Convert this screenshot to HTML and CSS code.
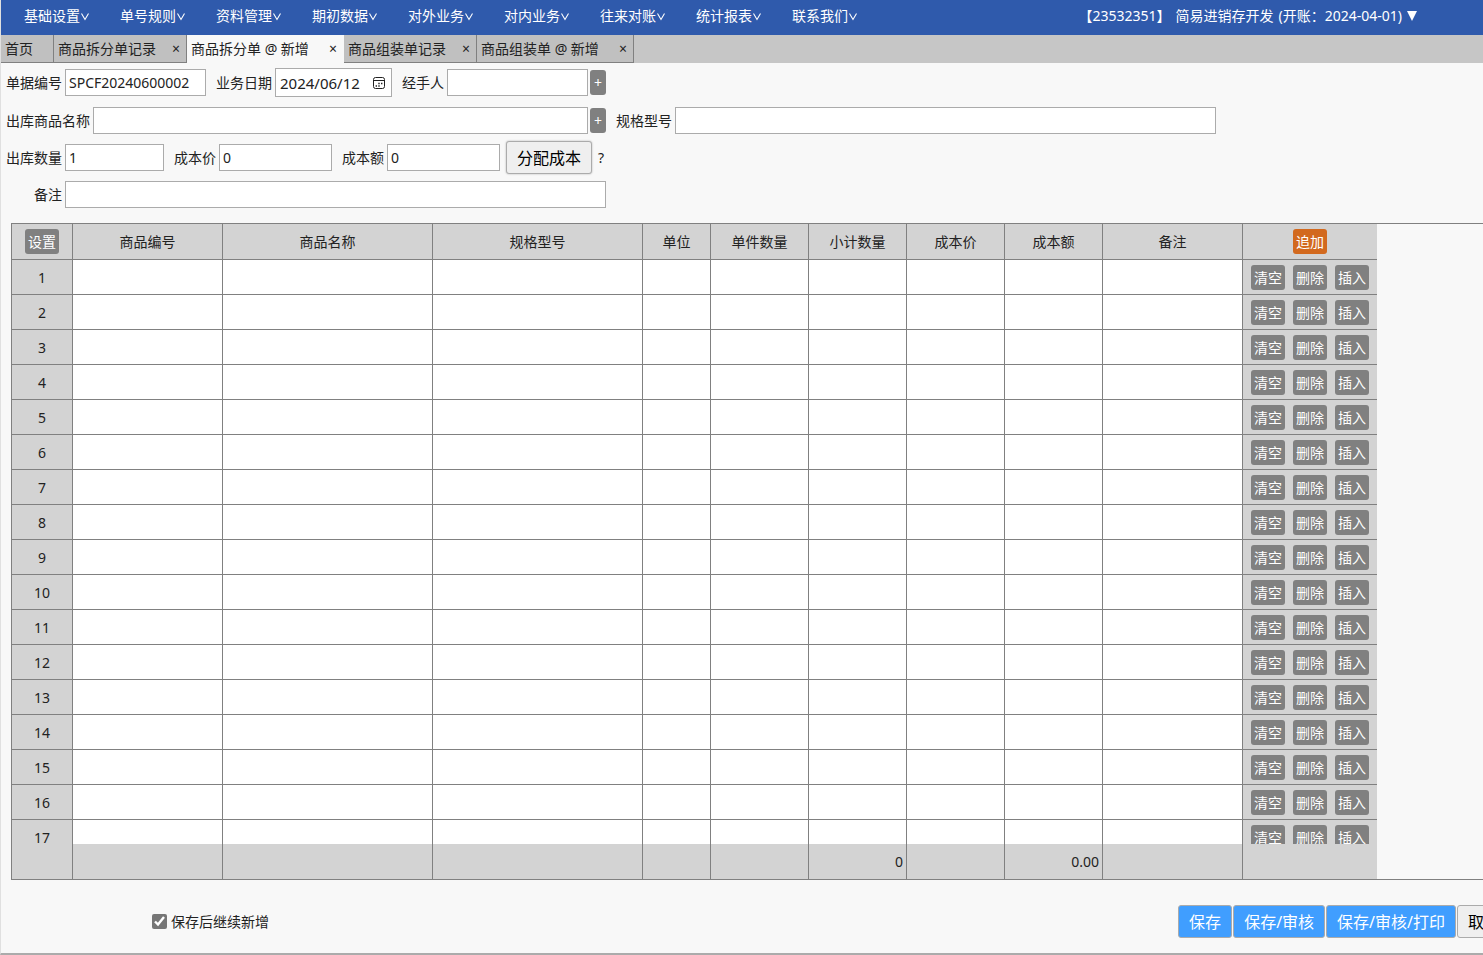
FILE: index.html
```html
<!DOCTYPE html>
<html lang="zh-CN">
<head>
<meta charset="utf-8">
<title>商品拆分单 @ 新增</title>
<link rel="stylesheet" href="styles.css">
</head>
<body>
<div class="app">
  <header class="navbar">
    <nav class="menu" id="menu"></nav>
    <button class="account" type="button"><span>【23532351】</span><span>简易进销存开发</span><span>(开账：2024-04-01)</span><svg class="caret" viewBox="0 0 10 10"><path d="M0 0h10L5 10z" fill="currentColor"/></svg></button>
  </header>

  <div class="tabs">
    <div class="tab"><a class="tab-link tab-home" href="#">首页</a></div>
    <div class="tab"><a class="tab-link" href="#">商品拆分单记录</a><button class="tab-close" type="button">×</button></div>
    <div class="tab tab-new tab-active"><a class="tab-link" href="#">商品拆分单 @ 新增</a><button class="tab-close" type="button">×</button></div>
    <div class="tab"><a class="tab-link" href="#">商品组装单记录</a><button class="tab-close" type="button">×</button></div>
    <div class="tab tab-new"><a class="tab-link" href="#">商品组装单 @ 新增</a><button class="tab-close" type="button">×</button></div>
  </div>

  <main class="page">
    <form class="form">
      <div class="row row-first">
        <div class="field"><label class="label" for="no">单据编号</label><input class="input w-code" id="no" type="text" value="SPCF20240600002"></div>
        <div class="field"><label class="label" for="date">业务日期</label>
          <div class="date">
            <input class="date-input" id="date" type="text" value="2024/06/12">
            <button class="date-button" type="button" aria-label="日历"><svg class="date-icon" viewBox="0 0 14 14"><rect x="1.5" y="1.5" width="11" height="11" rx="2" fill="none" stroke="#222"/><path d="M1.5 4.5h11" stroke="#222"/><path d="M6.3 7.5h1.4M9 7.5h1.4M3.6 10H5M6.3 10h1.4" stroke="#222" stroke-width="1.3"/></svg></button>
          </div>
        </div>
        <div class="field"><label class="label" for="who">经手人</label><input class="input w-code" id="who" type="text"><button class="chip chip-plus" type="button">+</button></div>
      </div>
      <div class="row">
        <div class="field"><label class="label" for="goods">出库商品名称</label><input class="input w-goods" id="goods" type="text"><button class="chip chip-plus" type="button">+</button></div>
        <div class="field"><label class="label" for="spec">规格型号</label><input class="input w-long" id="spec" type="text"></div>
      </div>
      <div class="row">
        <div class="field"><label class="label" for="qty">出库数量</label><input class="input w-qty" id="qty" type="text" value="1"></div>
        <div class="field"><label class="label" for="price">成本价</label><input class="input w-cost" id="price" type="text" value="0"></div>
        <div class="field"><label class="label" for="amount">成本额</label><input class="input w-cost" id="amount" type="text" value="0"><button class="button button-split" type="button">分配成本</button><span class="help">?</span></div>
      </div>
      <div class="row">
        <div class="field"><label class="label label-note" for="note">备注</label><input class="input w-long" id="note" type="text"></div>
      </div>
    </form>

    <div class="grid">
      <table class="table">
        <colgroup>
          <col class="c-no"><col class="c-code"><col class="c-name"><col class="c-name"><col class="c-unit"><col class="c-num"><col class="c-num"><col class="c-num"><col class="c-num"><col class="c-note"><col class="c-ops">
        </colgroup>
        <thead>
          <tr>
            <th><button class="chip" type="button">设置</button></th>
            <th>商品编号</th><th>商品名称</th><th>规格型号</th><th>单位</th><th>单件数量</th><th>小计数量</th><th>成本价</th><th>成本额</th><th>备注</th>
            <th><button class="chip chip-add" type="button">追加</button></th>
          </tr>
        </thead>
        <tbody id="rows"></tbody>
        <tfoot>
          <tr><td></td><td></td><td></td><td></td><td></td><td></td><td>0</td><td></td><td>0.00</td><td></td><td></td></tr>
        </tfoot>
      </table>
    </div>

    <div class="footer">
      <label class="keep"><input class="keep-box" type="checkbox" checked>保存后继续新增</label>
      <div class="actions">
        <button class="button button-primary" type="button">保存</button>
        <button class="button button-primary" type="button">保存/审核</button>
        <button class="button button-primary" type="button">保存/审核/打印</button>
        <button class="button" type="button">取消</button>
      </div>
    </div>
  </main>
</div>
<script src="app.js"></script>
</body>
</html>
```

FILE: styles.css
```css
* {
  box-sizing: border-box;
}

body {
  margin: 0;
  background: #f8f8f8;
  color: #222;
  font: 14px/20px "Noto Sans", "Noto Sans CJK SC", sans-serif;
}

button,
input {
  margin: 0;
  font: inherit;
  color: inherit;
}

button {
  padding: 0;
  border: 0;
  background: none;
  white-space: nowrap;
}

a {
  color: inherit;
  text-decoration: none;
}

.app {
  display: flex;
  flex-direction: column;
  height: 100vh;
  overflow: hidden;
  border-left: 1px solid #e0e0e0;
  border-bottom: 2px solid #ababab;
}

/* top menu */
.navbar {
  display: flex;
  flex: none;
  align-items: center;
  justify-content: space-between;
  height: 35px;
  padding: 0 66px 3px 23px;
  background: #2f5aac;
  color: #fff;
}

.menu {
  display: flex;
  gap: 30px;
}

.menu-item {
  display: flex;
  align-items: center;
  width: 66px;
}

.menu-arrow {
  width: 10px;
  height: 10px;
}

.account {
  display: flex;
  align-items: center;
  gap: 5px;
}

.caret {
  width: 10px;
  height: 10px;
}

/* open documents */
.tabs {
  display: flex;
  flex: none;
  height: 28px;
  background: #c6c6c6;
}

.tab {
  display: flex;
  align-items: center;
  justify-content: space-between;
  gap: 10px;
  padding-left: 4px;
  border-right: 1px solid #808080;
  border-bottom: 1px solid #808080;
  background: #c0c0c0;
}

.tab-new {
  min-width: 157px;
}

.tab-active {
  border-color: #f8f8f8;
  background: #f8f8f8;
}

.tab-link {
  white-space: nowrap;
}

.tab-home {
  padding-right: 20px;
}

.tab-close {
  width: 20px;
}

/* document form */
.page {
  display: flex;
  flex: 1;
  flex-direction: column;
  min-height: 0;
}

.form {
  padding: 1px 5px 0;
}

.row {
  display: flex;
  align-items: center;
  gap: 10px;
  height: 37px;
}

.row-first {
  margin-bottom: 1px;
}

.field {
  display: flex;
  align-items: center;
}

.label {
  margin-right: 3px;
  white-space: nowrap;
}

.label-note {
  width: 56px;
  text-align: right;
}

.input {
  height: 27px;
  padding: 0 3px;
  border: 1px solid #ababab;
  background: #fff;
}

.w-code { width: 141px; }
.w-goods { width: 495px; }
.w-long { width: 541px; }
.w-qty { width: 99px; }
.w-cost { width: 113px; }

.date {
  display: flex;
  align-items: center;
  width: 117px;
  height: 29px;
  border: 1px solid #ababab;
  background: #fff;
}

.date-input {
  flex: 1;
  min-width: 0;
  padding: 0 0 0 4px;
  border: 0;
  background: none;
  font-size: 15px;
}

.date-button {
  display: flex;
  padding-right: 5px;
}

.date-icon {
  width: 14px;
  height: 14px;
}

.chip {
  height: 25px;
  padding: 0 3px;
  border-radius: 3px;
  background: #808080;
  color: #fff;
}

.chip-plus {
  width: 16px;
  margin-left: 2px;
}

.chip-add {
  background: #d2691e;
}

.button {
  height: 33px;
  padding: 0 10px;
  border: 1px solid #ababab;
  border-radius: 3px;
  background: #efefef;
  color: #000;
  font-size: 16px;
}

.button-split {
  margin: 0 6px;
  box-shadow: 0 0 2px #ababab;
}

.button-primary {
  background: #409eff;
  color: #fff;
}

/* detail lines */
.grid {
  flex: 1;
  min-height: 0;
  margin: 10px 0 0 10px;
  overflow: hidden;
  border: 1px solid #808080;
  border-right: 0;
}

.table {
  width: 1365px;
  table-layout: fixed;
  border-spacing: 0;
}

.c-no { width: 61px; }
.c-code { width: 150px; }
.c-name { width: 210px; }
.c-unit { width: 68px; }
.c-num { width: 98px; }
.c-note { width: 140px; }
.c-ops { width: 134px; }

.table th,
.table td {
  height: 35px;
  padding: 0;
  border-right: 1px solid #808080;
  border-bottom: 1px solid #808080;
  background: #fff;
  font-weight: normal;
  text-align: center;
  vertical-align: middle;
}

.table th {
  height: 36px;
}

.table tbody td {
  padding-top: 1px;
}

.table th,
.table tfoot td,
.table td:first-child,
.table td:last-child {
  background: #d3d3d3;
}

.table th:last-child,
.table td:last-child {
  border-right: 0;
}

.table thead {
  position: sticky;
  top: 0;
}

.table tfoot {
  position: sticky;
  bottom: 0;
}

.table tfoot td {
  padding-right: 3px;
  border-bottom: 0;
  text-align: right;
}

.ops {
  display: flex;
  justify-content: center;
  gap: 8px;
}

/* save bar */
.footer {
  display: flex;
  flex: none;
  align-items: center;
  padding: 25px 0 15px 151px;
  overflow: hidden;
}

.keep {
  display: flex;
  align-items: center;
  gap: 4px;
  white-space: nowrap;
}

.keep-box {
  width: 15px;
  height: 15px;
  accent-color: #767676;
}

.actions {
  display: flex;
  gap: 1px;
  margin: 0 -28px 0 auto;
}
```

FILE: app.js
```javascript
const menus = ['基础设置', '单号规则', '资料管理', '期初数据', '对外业务', '对内业务', '往来对账', '统计报表', '联系我们'];
const arrow = '<svg class="menu-arrow" viewBox="0 0 10 10"><path d="M1.5 2.5L5 8.5 8.5 2.5" fill="none" stroke="currentColor" stroke-width="1.1"/></svg>';
document.getElementById('menu').innerHTML = menus
  .map((name) => `<a class="menu-item" href="#">${name}${arrow}</a>`)
  .join('');

const ops = ['清空', '删除', '插入']
  .map((name) => `<button class="chip" type="button">${name}</button>`)
  .join('');
let rows = '';
for (let n = 1; n <= 17; n++) {
  rows += `<tr><td>${n}</td>${'<td></td>'.repeat(9)}<td><div class="ops">${ops}</div></td></tr>`;
}
document.getElementById('rows').innerHTML = rows;
```
